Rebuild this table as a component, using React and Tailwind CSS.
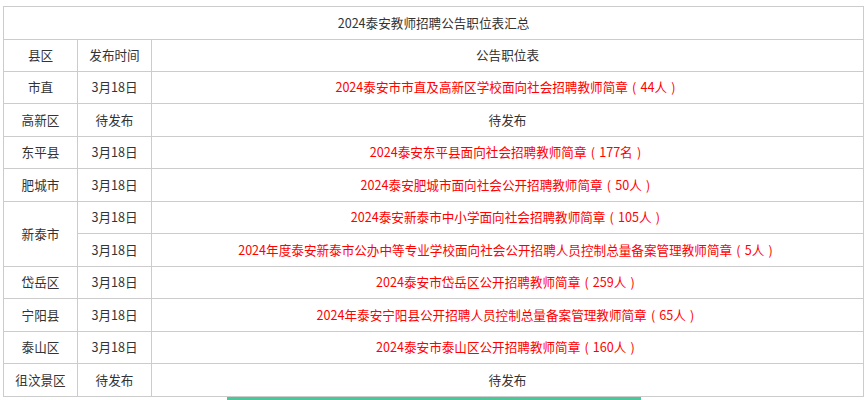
import React from 'react'

const font = { fontFamily: '"Microsoft YaHei", "Noto Sans CJK SC", "Noto Sans", sans-serif' }

const rows = [
  { area: '市直', date: '3月18日', text: '2024泰安市市直及高新区学校面向社会招聘教师简章', count: '44人', red: true, h: 'h-[32px]' },
  { area: '高新区', date: '待发布', text: '待发布', red: false, h: 'h-[33px]' },
  { area: '东平县', date: '3月18日', text: '2024泰安东平县面向社会招聘教师简章', count: '177名', red: true, h: 'h-[32px]' },
  { area: '肥城市', date: '3月18日', text: '2024泰安肥城市面向社会公开招聘教师简章', count: '50人', red: true, h: 'h-[33px]' },
  { area: '新泰市', span: 2, date: '3月18日', text: '2024泰安新泰市中小学面向社会招聘教师简章', count: '105人', red: true, h: 'h-[32px]' },
  { date: '3月18日', text: '2024年度泰安新泰市公办中等专业学校面向社会公开招聘人员控制总量备案管理教师简章', count: '5人', red: true, h: 'h-[33px]' },
  { area: '岱岳区', date: '3月18日', text: '2024泰安市岱岳区公开招聘教师简章', count: '259人', red: true, h: 'h-[32px]' },
  { area: '宁阳县', date: '3月18日', text: '2024年泰安宁阳县公开招聘人员控制总量备案管理教师简章', count: '65人', red: true, h: 'h-[33px]' },
  { area: '泰山区', date: '3月18日', text: '2024泰安市泰山区公开招聘教师简章', count: '160人', red: true, h: 'h-[32px]' },
  { area: '徂汶景区', date: '待发布', text: '待发布', red: false, h: 'h-[33px]' },
]

const cell = 'border border-[#cccccc] p-0 text-center align-middle'

// full-width brackets with the glyph centred, like YaHei draws them
function Paren({ children }){
  return <span className="inline-block w-[1em] text-center">{children}</span>
}

export default function App(){
  return (
    <div className="min-h-screen bg-white pl-[3px] pt-[6px] text-[12.6px] text-[#333333]" style={font}>
      <table className="w-[861px] table-fixed border-collapse">
        <colgroup>
          <col className="w-[74px]" />
          <col className="w-[74px]" />
          <col />
        </colgroup>
        <tbody>
          <tr className="h-[33px]">
            <td colSpan={3} className={cell}>2024泰安教师招聘公告职位表汇总</td>
          </tr>
          <tr className="h-[32px]">
            <td className={cell}>县区</td>
            <td className={cell}>发布时间</td>
            <td className={cell}>公告职位表</td>
          </tr>
          {rows.map((r, idx) => (
            <tr key={idx} className={r.h}>
              {r.area && <td rowSpan={r.span || 1} className={cell}>{r.area}</td>}
              <td className={cell}>{r.date}</td>
              <td className={`${cell} ${r.red ? 'text-[#ff0000]' : ''}`}>
                {r.text}
                {r.count && <><Paren>(</Paren>{r.count}<Paren>)</Paren></>}
              </td>
            </tr>
          ))}
        </tbody>
      </table>
      <div className="ml-[224px] h-[4px] w-[414px] bg-[#4cc79a]" />
    </div>
  )
}
